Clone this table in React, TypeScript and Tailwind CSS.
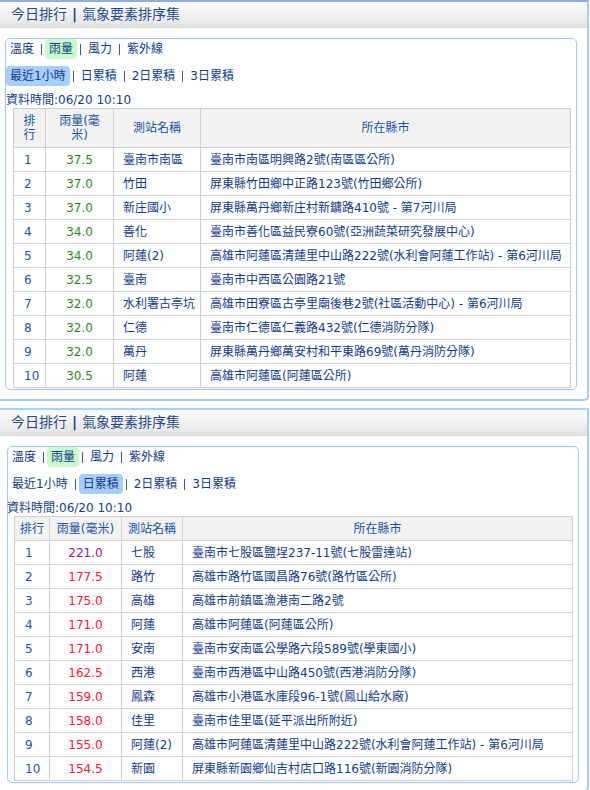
import React from 'react';

type Row = { rank: number; value: string; station: string; address: string; color: string };

const hourRows: Row[] = [
    { rank: 1, value: '37.5', station: '臺南市南區', address: '臺南市南區明興路2號(南區區公所)', color: 'text-[#2f8a1c]' },
    { rank: 2, value: '37.0', station: '竹田', address: '屏東縣竹田鄉中正路123號(竹田鄉公所)', color: 'text-[#2f8a1c]' },
    { rank: 3, value: '37.0', station: '新庄國小', address: '屏東縣萬丹鄉新庄村新鏞路410號 - 第7河川局', color: 'text-[#2f8a1c]' },
    { rank: 4, value: '34.0', station: '善化', address: '臺南市善化區益民寮60號(亞洲蔬菜研究發展中心)', color: 'text-[#2f8a1c]' },
    { rank: 5, value: '34.0', station: '阿蓮(2)', address: '高雄市阿蓮區清蓮里中山路222號(水利會阿蓮工作站) - 第6河川局', color: 'text-[#2f8a1c]' },
    { rank: 6, value: '32.5', station: '臺南', address: '臺南市中西區公園路21號', color: 'text-[#2f8a1c]' },
    { rank: 7, value: '32.0', station: '水利署古亭坑', address: '高雄市田寮區古亭里廟後巷2號(社區活動中心) - 第6河川局', color: 'text-[#2f8a1c]' },
    { rank: 8, value: '32.0', station: '仁德', address: '臺南市仁德區仁義路432號(仁德消防分隊)', color: 'text-[#2f8a1c]' },
    { rank: 9, value: '32.0', station: '萬丹', address: '屏東縣萬丹鄉萬安村和平東路69號(萬丹消防分隊)', color: 'text-[#2f8a1c]' },
    { rank: 10, value: '30.5', station: '阿蓮', address: '高雄市阿蓮區(阿蓮區公所)', color: 'text-[#2f8a1c]' },
];

const dayRows: Row[] = [
    { rank: 1, value: '221.0', station: '七股', address: '臺南市七股區鹽埕237-11號(七股雷達站)', color: 'text-[#9a1490]' },
    { rank: 2, value: '177.5', station: '路竹', address: '高雄市路竹區國昌路76號(路竹區公所)', color: 'text-[#ff1438]' },
    { rank: 3, value: '175.0', station: '高雄', address: '高雄市前鎮區漁港南二路2號', color: 'text-[#ff1438]' },
    { rank: 4, value: '171.0', station: '阿蓮', address: '高雄市阿蓮區(阿蓮區公所)', color: 'text-[#ff1438]' },
    { rank: 5, value: '171.0', station: '安南', address: '臺南市安南區公學路六段589號(學東國小)', color: 'text-[#ff1438]' },
    { rank: 6, value: '162.5', station: '西港', address: '臺南市西港區中山路450號(西港消防分隊)', color: 'text-[#ff1438]' },
    { rank: 7, value: '159.0', station: '鳳森', address: '高雄市小港區水庫段96-1號(鳳山給水廠)', color: 'text-[#ff1438]' },
    { rank: 8, value: '158.0', station: '佳里', address: '臺南市佳里區(延平派出所附近)', color: 'text-[#ff1438]' },
    { rank: 9, value: '155.0', station: '阿蓮(2)', address: '高雄市阿蓮區清蓮里中山路222號(水利會阿蓮工作站) - 第6河川局', color: 'text-[#ff1438]' },
    { rank: 10, value: '154.5', station: '新園', address: '屏東縣新園鄉仙吉村店口路116號(新園消防分隊)', color: 'text-[#ff1438]' },
];

const TabRow = ({ items, active, activeClass }: { items: string[]; active: number; activeClass: string }) => (
    <div className="flex items-center h-[20px]">
        {items.map((t, i) => (
            <React.Fragment key={t}>
                {i > 0 && <span className="mx-[3px] h-[11px] w-px bg-[#4153a3]" />}
                <span className={`px-[4px] h-[20px] leading-[20px] rounded-[4px] ${i === active ? activeClass : ''}`}>{t}</span>
            </React.Fragment>
        ))}
    </div>
);

const cell = 'border-r border-b border-[#cfcfcf] flex items-center';

function RankTable({ rows, cols, headerHeight, header }: { rows: Row[]; cols: string; headerHeight: string; header: React.ReactNode[] }) {
    return (
        <div className="border-l border-t border-[#cfcfcf]">
            <div className={`grid ${cols} ${headerHeight} bg-[#f2f2f2] text-[#1552a2] leading-[14px]`}>
                {header.map((h, i) => (
                    <div key={i} className={`${cell} justify-center text-center`}>{h}</div>
                ))}
            </div>
            {rows.map(r => (
                <div key={r.rank} className={`grid ${cols} h-[24px]`}>
                    <div className={`${cell} pl-[10px] text-[#24549f]`}>{r.rank}</div>
                    <div className={`${cell} justify-center ${r.color}`}>{r.value}</div>
                    <div className={`${cell} pl-[9px] whitespace-nowrap`}>{r.station}</div>
                    <div className={`${cell} pl-[9px] whitespace-nowrap overflow-hidden`}>{r.address}</div>
                </div>
            ))}
        </div>
    );
}

const PanelHeader = () => (
    <div className="h-[26px] bg-gradient-to-b from-white to-[#e3e3e3] border-b border-[#d6d6d6] flex items-center pl-[11px] text-[14px] text-[#1b4a8c]">
        今日排行 <span className="mx-[5px] font-bold">|</span> 氣象要素排序集
    </div>
);

export default function App() {
    return (
        <div className="w-[590px] h-[790px] overflow-hidden bg-white text-[12px] text-[#0f3d8c] font-['DejaVu_Sans','Noto_Sans_CJK_TC',sans-serif]">
            <div className="w-[589px] border-t-2 border-t-[#8eaaf0] border-r-2 border-r-[#a5cdf6] border-b-2 border-b-[#a5cdf6] rounded-br-[5px] pb-[9px]">
                <PanelHeader />
                <div className="mt-[10px] ml-[5px] w-[572px] border border-[#9ccaf5] rounded-[5px] pb-[1px]">
                    <TabRow items={['溫度', '雨量', '風力', '紫外線']} active={1} activeClass="bg-[#c9fac9]" />
                    <div className="mt-[7px]">
                        <TabRow items={['最近1小時', '日累積', '2日累積', '3日累積']} active={0} activeClass="bg-[#a8cdfa]" />
                    </div>
                    <div className="h-[22px] pt-[6px] leading-[16px]">資料時間:06/20 10:10</div>
                    <div className="ml-[7px] w-[558px]">
                        <RankTable
                            rows={hourRows}
                            cols="grid-cols-[32px_68px_87px_370px]"
                            headerHeight="h-[39px]"
                            header={[
                                <>排<br />行</>,
                                <>雨量(毫<br />米)</>,
                                '測站名稱',
                                '所在縣市',
                            ]}
                        />
                    </div>
                </div>
            </div>

            <div className="mt-[7px] w-[589px] border-t-2 border-t-[#a9d0f6] border-r-2 border-r-[#a5cdf6] border-b-2 border-b-[#a5cdf6] rounded-br-[5px] pb-[7px]">
                <PanelHeader />
                <div className="mt-[10px] ml-[7px] w-[572px] border border-[#9ccaf5] rounded-[5px] pb-[1px]">
                    <TabRow items={['溫度', '雨量', '風力', '紫外線']} active={1} activeClass="bg-[#c9fac9]" />
                    <div className="mt-[7px]">
                        <TabRow items={['最近1小時', '日累積', '2日累積', '3日累積']} active={1} activeClass="bg-[#a8cdfa]" />
                    </div>
                    <div className="h-[22px] pt-[6px] leading-[16px] -ml-px">資料時間:06/20 10:10</div>
                    <div className="ml-[6px] w-[559px]">
                        <RankTable
                            rows={dayRows}
                            cols="grid-cols-[35px_72px_61px_390px]"
                            headerHeight="h-[24px]"
                            header={['排行', '雨量(毫米)', '測站名稱', '所在縣市']}
                        />
                    </div>
                </div>
            </div>
        </div>
    );
}
